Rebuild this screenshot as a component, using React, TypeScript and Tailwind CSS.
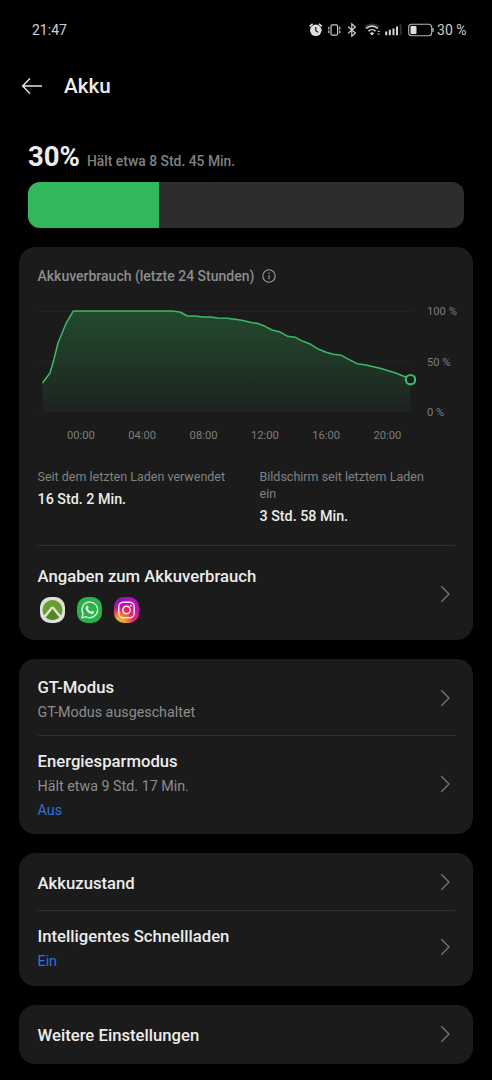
import type { ReactNode } from "react";

const HISTORY: [number, number][] = [
  [4.5, 83], [12, 73], [16, 59], [20, 43], [28, 23.5], [35.3, 11], [134, 11], [142, 12],
  [149.5, 16], [157, 16], [165, 17], [172, 17], [180, 18], [189, 18.2], [197, 19.2],
  [205, 20.6], [212, 22.3], [219, 23.3], [227, 26.3], [234, 30], [241.5, 31.7],
  [249.7, 36.3], [257.3, 37.3], [265, 41.3], [272.7, 44.3], [280.7, 49.3], [288, 52.3],
  [295.3, 54.3], [303.3, 55.3], [311.3, 59.7], [319, 63.7], [326.7, 64.7], [342, 68.3],
  [357, 72.7], [367, 76.7], [372.3, 79.7],
];

const HOURS = ["00:00", "04:00", "08:00", "12:00", "16:00", "20:00"];

function Chevron() {
  return (
    <svg
      width="12"
      height="20"
      viewBox="0 0 12 20"
      className="mr-[4px] shrink-0"
      fill="none"
      stroke="#777777"
      strokeWidth="1.3"
    >
      <path d="M2.3 2.3 10 10l-7.7 7.7" />
    </svg>
  );
}

function Card({ className, children }: { className: string; children: ReactNode }) {
  return (
    <section className={`mx-[19px] flex flex-col rounded-[16px] bg-[#1b1b1b] px-[18.5px] ${className}`}>
      {children}
    </section>
  );
}

function Divider() {
  return <div className="h-px shrink-0 bg-[#303030]" />;
}

function Row({
  title,
  description,
  value,
  className,
}: {
  title: string;
  description?: string;
  value?: string;
  className: string;
}) {
  return (
    <div className={`flex items-center justify-between pb-px ${className}`}>
      <div className="pt-[3px]">
        <h2 className="text-[16.7px] leading-[25px] font-medium text-[#ececec]">{title}</h2>
        {description && <p className="text-[14.3px] leading-6 text-[#8d8d8d]">{description}</p>}
        {value && <p className="text-[14.3px] leading-6 text-[#2b73dc]">{value}</p>}
      </div>
      <Chevron />
    </div>
  );
}

function StatusBar() {
  return (
    <div className="flex h-[60px] items-center justify-between pr-[25.5px] pl-8 text-[14px] text-[#d0d0d0]">
      <span>21:47</span>
      <div className="flex items-center">
        <svg width="127" height="20" viewBox="0 0 127 20" fill="none" className="mr-[3px]">
          {/* alarm */}
          <circle cx="8.8" cy="10.3" r="5.8" fill="#dedede" />
          <path d="M2.7 6.3 5.6 3.8M14.9 6.3 12 3.8" stroke="#dedede" strokeWidth="1.6" />
          <path d="M8.8 7v3.8l2.4 1.6" stroke="#111" strokeWidth="1.1" />
          {/* vibrate */}
          <rect x="24" y="4.8" width="6.6" height="10.4" rx="1.2" stroke="#c8c8c8" strokeWidth="1.2" />
          <path d="M21.8 6.8v6.4M32.8 6.8v6.4" stroke="#c8c8c8" strokeWidth="1.2" strokeDasharray="2.7 1" />
          {/* bluetooth */}
          <path d="m41.2 6.8 7.2 6.2-3.6 3.2V3.8L48.4 7l-7.2 6.2" stroke="#d0d0d0" strokeWidth="1.2" />
          {/* wifi */}
          <path d="M57.8 7a11 11 0 0 1 14.4 0" stroke="#353535" strokeWidth="1.8" />
          <path d="M59 8.5a8.8 8.8 0 0 1 12 0" stroke="#d6d6d6" strokeWidth="1.6" />
          <path d="M61.4 11.2a5.4 5.4 0 0 1 7.2 0" stroke="#d6d6d6" strokeWidth="1.5" />
          <path d="m62.8 13.2 2.2 2.3 2.2-2.3a3.3 3.3 0 0 0-4.4 0Z" fill="#d6d6d6" />
          <path d="m70.2 12 1.5-1.7 1.5 1.7ZM70.2 13.4l1.5 1.7 1.5-1.7Z" fill="#b5b5b5" />
          {/* signal */}
          <path d="M79.2 11.6v3.6M82.8 9.8v5.4M86.5 8.6v6.6M90 6.4v8.8" stroke="#d8d8d8" strokeWidth="2" />
          <path d="M93.7 4.4v10.8" stroke="#303030" strokeWidth="2" />
          {/* battery */}
          <rect x="101.7" y="4.3" width="23" height="11.4" rx="3" stroke="#b5b5b5" strokeWidth="1.1" />
          <rect x="103.5" y="6.1" width="6" height="7.8" rx="1" fill="#dedede" />
          <path d="M126 8v4" stroke="#b5b5b5" strokeWidth="1.4" />
        </svg>
        <span>30 %</span>
      </div>
    </div>
  );
}

function UsageChart() {
  const line = HISTORY.map(([x, y]) => `${x},${y}`).join(" ");

  return (
    <div className="mt-[12px]">
      <div className="flex">
        <svg width="378" height="120" viewBox="0 0 378 120" fill="none" className="shrink-0">
          <defs>
            <linearGradient id="fade" x1="0" y1="11" x2="0" y2="111" gradientUnits="userSpaceOnUse">
              <stop stopColor="#234a2e" />
              <stop offset="1" stopColor="#1d231f" />
            </linearGradient>
          </defs>
          <polygon points={`4.5,111 ${line} 372.3,111`} fill="url(#fade)" />
          <path
            d="M0 11.5h377M0 61.5h377M0 111.5h377"
            stroke="#ffffff"
            strokeOpacity="0.04"
            strokeDasharray="3 1"
          />
          <polyline points={line} stroke="#3cb965" strokeWidth="1.5" strokeLinejoin="round" />
          <circle cx="372.5" cy="79.7" r="4.7" fill="#1b1b1b" stroke="#3cb965" strokeWidth="2.2" />
        </svg>
        <div className="mt-px ml-[11.5px] flex h-[123px] flex-col justify-between text-[11.2px] leading-[22px] whitespace-nowrap text-[#7d7d7d]">
          <span>100 %</span>
          <span>50 %</span>
          <span>0 %</span>
        </div>
      </div>
      <div className="mt-px ml-[12.8px] flex text-[11.2px] leading-[22px] text-[#7d7d7d]">
        {HOURS.map((hour) => (
          <span key={hour} className="w-[61.3px] text-center">
            {hour}
          </span>
        ))}
      </div>
    </div>
  );
}

function AppIcons() {
  return (
    <div className="mt-[8px] ml-[2px] flex gap-3">
      <svg width="25" height="26" viewBox="0 0 25 26" fill="none">
        <rect width="25" height="26" rx="10" fill="#dededb" />
        <circle cx="12.5" cy="13" r="10" fill="#6a9e2c" />
        <path d="m6 20.5 6.5-8.5 6.5 8.5a10 10 0 0 1-13 0Z" fill="#548724" />
        <path
          d="m4.8 19.5 5.6-6.7c.7-1.6 1.2-2.1 2.1-2.1s1.4.5 2.1 2.1l5.6 6.7"
          stroke="#e4e6df"
          strokeWidth="2.2"
          strokeLinejoin="round"
        />
      </svg>
      <svg width="25" height="26" viewBox="0 0 25 26" fill="none">
        <rect width="25" height="26" rx="10" fill="#2cb04a" />
        <path
          d="M4.9 20.8 6 16.7a7.8 7.8 0 1 1 3 3Z"
          stroke="#dff3e3"
          strokeWidth="1.3"
          strokeLinejoin="round"
        />
        <path
          d="M9.6 8.9c.6-.5 1.2-.3 1.4.2l.6 1.4c.2.5-.5 1-.7 1.3.7 1.4 1.7 2.3 3.1 2.9.4-.4.8-1.1 1.3-.9l1.5.8c.6.3.2 1.4-.3 1.8-1.5 1.2-3.7.2-5.2-1-1.4-1.1-3.3-3.3-2.7-5.2.2-.6.5-.9 1-1.3Z"
          fill="#dff3e3"
        />
      </svg>
      <svg width="25" height="26" viewBox="0 0 25 26" fill="none">
        <defs>
          <radialGradient id="insta" cx="0.22" cy="1.02" r="1.15">
            <stop stopColor="#f5c32c" />
            <stop offset="0.2" stopColor="#efa32b" />
            <stop offset="0.48" stopColor="#e92a5c" />
            <stop offset="0.75" stopColor="#d010a5" />
            <stop offset="1" stopColor="#b012c8" />
          </radialGradient>
          <radialGradient id="instaCorner" cx="0.1" cy="0" r="0.6">
            <stop stopColor="#6a16dc" />
            <stop offset="1" stopColor="#6a16dc" stopOpacity="0" />
          </radialGradient>
        </defs>
        <rect width="25" height="26" rx="10" fill="url(#insta)" />
        <rect width="25" height="26" rx="10" fill="url(#instaCorner)" />
        <rect x="4.8" y="5.3" width="15.4" height="15.4" rx="4.5" stroke="#fbe4ec" strokeWidth="1.5" />
        <circle cx="12.5" cy="13" r="3.7" stroke="#fbe4ec" strokeWidth="1.5" />
        <circle cx="16.8" cy="8.8" r="1" fill="#fbe4ec" />
      </svg>
    </div>
  );
}

export default function App() {
  return (
    <main className="h-[1080px] w-[492px] overflow-hidden bg-black font-[Roboto,sans-serif] text-[#ececec]">
      <StatusBar />

      <header className="flex h-[52px] items-center gap-[21px] pl-[21px]">
        <svg width="22" height="18" viewBox="0 0 22 18" fill="none" stroke="#e4e4e4" strokeWidth="1.5">
          <path d="M9 1.5 1.7 9 9 16.5M1.7 9H21" />
        </svg>
        <h1 className="text-[20.6px] font-medium">Akku</h1>
      </header>

      <div className="mx-7 mt-[28px]">
        <div className="flex h-[42px] items-baseline gap-[7px] pt-px leading-8">
          <span className="text-[27.5px] font-bold">30%</span>
          <span className="text-[13.9px] font-medium text-[#808080]">Hält etwa 8 Std. 45 Min.</span>
        </div>
        <div className="h-[46px] overflow-hidden rounded-[12px] bg-[#2d2d2d]">
          <div className="h-full w-[30%] bg-[#30b85b]" />
        </div>
      </div>

      <Card className="mt-[19px] h-[393px]">
        <div className="mt-[17px] flex h-6 items-center gap-[7.5px]">
          <h2 className="text-[14px] font-medium text-[#8d8d8d]">Akkuverbrauch (letzte 24 Stunden)</h2>
          <svg width="14" height="14" viewBox="0 0 14 14" fill="none" stroke="#999999">
            <circle cx="7" cy="7" r="6.2" strokeWidth="1.1" />
            <path d="M7 6.2v4M7 3.6v1.3" strokeWidth="1.2" />
          </svg>
        </div>
        <UsageChart />
        <div className="mt-[21px] flex h-[77px] leading-[17px]">
          <div className="w-[222px]">
            <p className="text-[12.5px] text-[#828282]">Seit dem letzten Laden verwendet</p>
            <p className="mt-[6px] text-[14.3px] font-medium">16 Std. 2 Min.</p>
          </div>
          <div className="w-[180px]">
            <p className="text-[12.5px] text-[#828282]">Bildschirm seit letztem Laden ein</p>
            <p className="mt-[6px] text-[14.3px] font-medium">3 Std. 58 Min.</p>
          </div>
        </div>
        <Divider />
        <div className="flex flex-1 items-center justify-between pt-px">
          <div>
            <h2 className="text-[16.7px] leading-6 font-medium">Angaben zum Akkuverbrauch</h2>
            <AppIcons />
          </div>
          <Chevron />
        </div>
      </Card>

      <Card className="mt-[19px] h-[175px]">
        <Row title="GT-Modus" description="GT-Modus ausgeschaltet" className="h-[76px] pt-[2px]" />
        <Divider />
        <Row
          title="Energiesparmodus"
          description="Hält etwa 9 Std. 17 Min."
          value="Aus"
          className="h-[96px]"
        />
      </Card>

      <Card className="mt-[19px] h-[133px]">
        <Row title="Akkuzustand" className="h-[57px] pt-[2px]" />
        <Divider />
        <Row title="Intelligentes Schnellladen" value="Ein" className="h-[73px]" />
      </Card>

      <Card className="mt-[19px] h-[59px]">
        <Row title="Weitere Einstellungen" className="h-[59px]" />
      </Card>
    </main>
  );
}
